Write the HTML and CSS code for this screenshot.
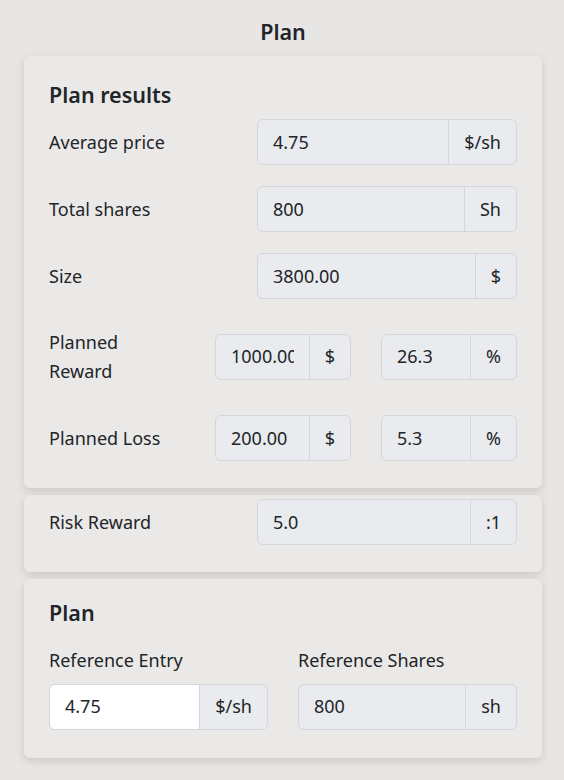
FILE: index.html
```html
<!DOCTYPE html>
<html lang="en">
<head>
<meta charset="utf-8">
<title>Plan</title>
<link rel="stylesheet" href="styles.css">
</head>
<body>
<div class="page">
  <h1 class="title">Plan</h1>

  <section class="card card-results">
    <h2 class="card-heading">Plan results</h2>
    <div class="rows">
      <div class="row">
        <div class="label">Average price</div>
        <div class="group"><input class="field" readonly value="4.75"><span class="addon">$/sh</span></div>
      </div>
      <div class="row">
        <div class="label">Total shares</div>
        <div class="group"><input class="field" readonly value="800"><span class="addon">Sh</span></div>
      </div>
      <div class="row">
        <div class="label">Size</div>
        <div class="group"><input class="field" readonly value="3800.00"><span class="addon">$</span></div>
      </div>
      <div class="row split">
        <div class="label">Planned Reward</div>
        <div class="group"><input class="field" readonly value="1000.00"><span class="addon">$</span></div>
        <div class="group"><input class="field" readonly value="26.3"><span class="addon">%</span></div>
      </div>
      <div class="row split">
        <div class="label">Planned Loss</div>
        <div class="group"><input class="field" readonly value="200.00"><span class="addon">$</span></div>
        <div class="group"><input class="field" readonly value="5.3"><span class="addon">%</span></div>
      </div>
    </div>
  </section>

  <section class="card card-risk">
    <div class="row">
      <div class="label">Risk Reward</div>
      <div class="group"><input class="field" readonly value="5.0"><span class="addon">:1</span></div>
    </div>
  </section>

  <section class="card card-plan">
    <h2 class="card-heading plan-heading">Plan</h2>
    <div class="cols">
      <div class="col">
        <label class="col-label">Reference Entry</label>
        <div class="group"><input class="field editable" value="4.75"><span class="addon">$/sh</span></div>
      </div>
      <div class="col">
        <label class="col-label">Reference Shares</label>
        <div class="group"><input class="field" readonly value="800"><span class="addon">sh</span></div>
      </div>
    </div>
  </section>
</div>
</body>
</html>
```

FILE: styles.css
```css
* { box-sizing: border-box; }

body {
  margin: 0;
  background: #e8e6e4;
  font-family: "Noto Sans", "Open Sans", sans-serif;
  font-size: 18px;
  line-height: 28.5px;
  color: #212529;
}

.page {
  padding: 19px 22px 20px 24px;
}

.title {
  margin: 0 0 11px;
  font-size: 21.5px;
  line-height: 26px;
  font-weight: 600;
  text-align: center;
}

.card {
  background: #ebe9e7;
  border-radius: 6px;
  box-shadow: 0 3px 8px rgba(0, 0, 0, 0.13);
}

.card + .card {
  margin-top: 7px;
}

.card-results {
  padding: 26px 25px 27px;
}

.card-risk {
  padding: 4px 25px 27px;
}

.card-plan {
  padding: 21px 25px 28px;
}

.card-heading {
  margin: 0 0 11px;
  font-size: 21.5px;
  line-height: 26px;
  font-weight: 600;
}

.plan-heading {
  margin-bottom: 20px;
}

.rows {
  display: flex;
  flex-direction: column;
  gap: 21px;
}

.row {
  display: grid;
  grid-template-columns: 178px minmax(0, 1fr);
  column-gap: 30px;
  align-items: center;
}

.row.split {
  grid-template-columns: minmax(0, 1fr) minmax(0, 1fr) minmax(0, 1fr);
  margin-top: 8px;
}

.row.split + .row.split {
  margin-top: 9px;
}

.row.split .label {
  padding-right: 12px;
}

.group {
  display: flex;
  min-width: 0;
  height: 46px;
  border: 1px solid #d3d6da;
  border-radius: 6px;
  background: #e9ebee;
  overflow: hidden;
}

.field {
  flex: 1 1 0;
  width: 0;
  min-width: 0;
  border: 0;
  margin: 0;
  background: transparent;
  font: inherit;
  color: #212529;
  padding: 0 15px;
  outline: none;
}

.field.editable {
  background: #ffffff;
}

.addon {
  display: flex;
  align-items: center;
  justify-content: center;
  padding: 0 15px;
  border-left: 1px solid #d3d6da;
  white-space: nowrap;
}

.cols {
  display: grid;
  grid-template-columns: minmax(0, 1fr) minmax(0, 1fr);
  column-gap: 30px;
}

.col {
  min-width: 0;
}

.col-label {
  display: block;
  margin-bottom: 9px;
}
```
